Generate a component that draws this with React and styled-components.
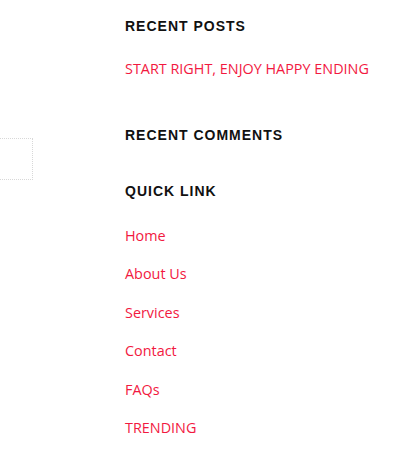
import React from 'react';
import styled, { createGlobalStyle } from 'styled-components';

const GlobalStyle = createGlobalStyle`
  body {
    margin: 0;
    background: #fff;
    font-family: "Open Sans", "Noto Sans", sans-serif;
  }
`;

const Page = styled.div`
  display: flex;
  width: 413px;
  height: 454px;
  overflow: hidden;
`;

const LeftCol = styled.div`
  width: 125px;
  flex-shrink: 0;
  padding-top: 138px;
`;

const SearchBox = styled.div`
  width: 32px;
  height: 40px;
  border: 1px dotted #d8d8d8;
  border-left: none;
`;

const Sidebar = styled.div`
  display: flex;
  flex-direction: column;
  padding-top: 17px;
`;

const Widget = styled.section`
  margin-bottom: ${p => p.gap || 28}px;
`;

const Title = styled.h3`
  margin: 0 0 ${p => p.space || 0}px;
  font-family: "Liberation Sans", Arial, sans-serif;
  font-size: 14px;
  font-weight: bold;
  letter-spacing: 1px;
  line-height: 18px;
  color: #111;
`;

const LinkList = styled.ul`
  list-style: none;
  margin: 0;
  padding: 0;
  display: flex;
  flex-direction: column;
  gap: 17.4px;
`;

const Item = styled.li`
  font-size: 14.4px;
  line-height: 21px;
  a {
    color: #f2193f;
    text-decoration: none;
  }
`;

const links = ['Home', 'About Us', 'Services', 'Contact', 'FAQs', 'TRENDING'];

export default function App() {
  return (
    <>
      <GlobalStyle />
      <Page>
        <LeftCol>
          <SearchBox />
        </LeftCol>
        <Sidebar>
          <Widget gap={47}>
            <Title space={23}>RECENT POSTS</Title>
            <LinkList>
              <Item><a href="#">START RIGHT, ENJOY HAPPY ENDING</a></Item>
            </LinkList>
          </Widget>
          <Widget gap={38}>
            <Title>RECENT COMMENTS</Title>
          </Widget>
          <Widget>
            <Title space={25}>QUICK LINK</Title>
            <LinkList>
              {links.map(l => (
                <Item key={l}><a href="#">{l}</a></Item>
              ))}
            </LinkList>
          </Widget>
        </Sidebar>
      </Page>
    </>
  );
}
